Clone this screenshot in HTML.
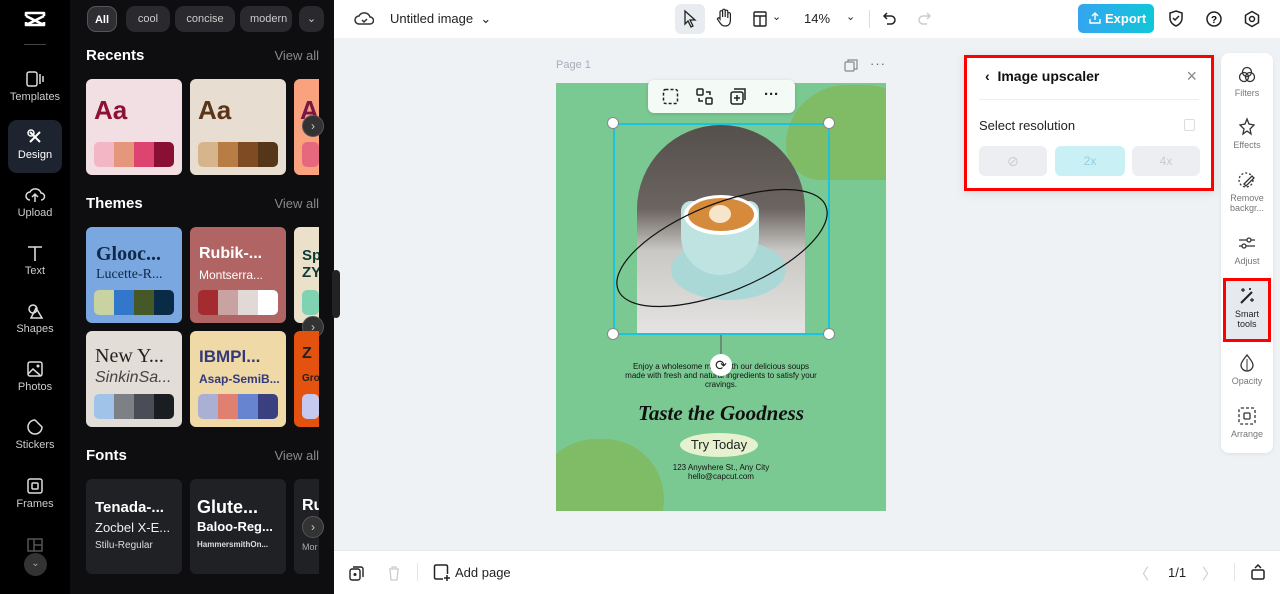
<!DOCTYPE html>
<html><head><meta charset="utf-8"><style>
*{box-sizing:border-box;margin:0;padding:0}
body{width:1280px;height:594px;overflow:hidden;font-family:"Liberation Sans",sans-serif;background:#eff2f5;position:relative}
.abs{position:absolute}
.rail{left:0;top:0;width:70px;height:594px;background:#000}
.ri{position:absolute;left:0;width:70px;text-align:center;color:#ccc;font-size:11px}
.ri svg{display:block;margin:0 auto 3px}
.panel{left:70px;top:0;width:264px;height:594px;background:#0e0e10}
.chip{position:absolute;top:6px;height:26px;border-radius:9px;background:#2a2a2e;color:#ccc;font-size:11px;line-height:26px;text-align:center}
.h{position:absolute;left:16px;color:#fff;font-weight:bold;font-size:15px}
.va{position:absolute;right:15px;color:#888;font-size:13px}
.card{position:absolute;width:96px;height:96px;border-radius:6px;overflow:hidden}
.pal{position:absolute;left:8px;right:8px;bottom:8px;height:25px;border-radius:5px;overflow:hidden;display:flex}
.pal i{flex:1}
.arr{position:absolute;width:22px;height:22px;border-radius:50%;background:#333;border:1px solid #555;color:#ccc;font-size:12px;text-align:center;line-height:20px}
.top{left:334px;top:0;width:946px;height:38px;background:#fff}
.bot{left:334px;top:550px;width:946px;height:44px;background:#fff;border-top:1px solid #e5e7ea}
.sb{left:1221px;top:53px;width:52px;height:400px;background:#fff;border-radius:8px;box-shadow:0 1px 4px rgba(0,0,0,.08)}
.si{position:absolute;left:0;width:52px;text-align:center;font-size:9px;color:#777;line-height:10px}
.si svg{display:block;margin:0 auto 3px}
</style></head><body>
<div class="abs rail">
 <svg class="abs" style="left:23px;top:10px" width="24" height="18" viewBox="0 0 24 18"><path d="M3 6V3h18v3M3 12v3h18v-3M3 6l18 9M21 6L3 15" stroke="#fff" stroke-width="2.6" fill="none" stroke-linejoin="round"/></svg>
 <div class="abs" style="left:24px;top:44px;width:22px;height:1px;background:#444"></div>
 <div class="ri" style="top:70px"><svg width="20" height="18"><rect x="2" y="2" width="10" height="14" rx="2" fill="none" stroke="#ddd" stroke-width="1.5"/><path d="M15 4v10M18 6v6" stroke="#ddd" stroke-width="1.5"/></svg>Templates</div>
 <div class="abs" style="left:8px;top:120px;width:54px;height:53px;border-radius:9px;background:#1d2430"></div>
 <div class="ri" style="top:128px;color:#fff"><svg width="20" height="18"><path d="M5 4l10 10M15 4L5 14" stroke="#fff" stroke-width="2"/><circle cx="6" cy="5" r="3" fill="none" stroke="#fff" stroke-width="1.5"/></svg>Design</div>
 <div class="ri" style="top:186px"><svg width="22" height="18"><path d="M6 14a4 4 0 010-8 6 6 0 0111 1 3.5 3.5 0 010 7M11 16V9M8 11l3-3 3 3" stroke="#ddd" stroke-width="1.5" fill="none"/></svg>Upload</div>
 <div class="ri" style="top:244px"><svg width="20" height="18"><path d="M3 3h14M10 3v14" stroke="#ddd" stroke-width="1.6"/></svg>Text</div>
 <div class="ri" style="top:302px"><svg width="20" height="18"><circle cx="8" cy="7" r="4" fill="none" stroke="#ddd" stroke-width="1.5"/><path d="M11 6l6 10H6z" fill="none" stroke="#ddd" stroke-width="1.5"/></svg>Shapes</div>
 <div class="ri" style="top:360px"><svg width="20" height="18"><rect x="3" y="2" width="14" height="14" rx="2" fill="none" stroke="#ddd" stroke-width="1.5"/><path d="M3 14l5-5 8 7" stroke="#ddd" stroke-width="1.5" fill="none"/><circle cx="13" cy="6" r="1.5" fill="#ddd"/></svg>Photos</div>
 <div class="ri" style="top:418px"><svg width="20" height="18"><path d="M10 2a7 7 0 107 7l-7-7z" fill="none" stroke="#ddd" stroke-width="1.5"/></svg>Stickers</div>
 <div class="ri" style="top:477px"><svg width="20" height="18"><rect x="3" y="2" width="14" height="14" rx="2" fill="none" stroke="#ddd" stroke-width="1.5"/><rect x="7" y="6" width="6" height="6" rx="1" fill="none" stroke="#ddd" stroke-width="1.5"/></svg>Frames</div>
 <svg class="abs" style="left:27px;top:538px" width="16" height="14"><rect x="1" y="1" width="14" height="12" fill="none" stroke="#555" stroke-width="1.5"/><path d="M7 1v12M7 7h8" stroke="#555" stroke-width="1.5"/></svg>
 <div class="abs" style="left:24px;top:553px;width:23px;height:23px;border-radius:50%;background:#333;color:#aaa;font-size:10px;text-align:center;line-height:22px">⌄</div>
</div>
<div class="abs panel">
 <div class="chip" style="left:17px;width:30px;background:#2f2f33;border:1px solid #555;color:#fff;font-weight:bold">All</div>
 <div class="chip" style="left:56px;width:44px">cool</div>
 <div class="chip" style="left:105px;width:60px">concise</div>
 <div class="chip" style="left:170px;width:52px;overflow:hidden;text-align:left;padding-left:10px">modern</div>
 <div class="chip" style="left:229px;width:25px">⌄</div>
 <div class="h" style="top:47px">Recents</div><div class="va" style="top:48px">View all</div>
 <div class="card" style="left:16px;top:79px;background:#f1dfe3"><div style="position:absolute;left:8px;top:16px;font-size:26px;font-weight:bold;color:#8f1036">Aa</div><div class="pal"><i style="background:#f2b6c4"></i><i style="background:#e5977b"></i><i style="background:#de4470"></i><i style="background:#8a0f35"></i></div></div>
 <div class="card" style="left:120px;top:79px;background:#e8ddd1"><div style="position:absolute;left:8px;top:16px;font-size:26px;font-weight:bold;color:#5a3518">Aa</div><div class="pal"><i style="background:#d6b48c"></i><i style="background:#b87d44"></i><i style="background:#7f4b22"></i><i style="background:#563619"></i></div></div>
 <div class="card" style="left:224px;top:79px;width:25px;border-radius:6px 0 0 6px;background:#f9a27d"><div style="position:absolute;left:6px;top:16px;font-size:26px;font-weight:bold;color:#7a1646">A</div><div class="pal" style="right:0"><i style="background:#e5687f"></i></div></div>
 <div class="arr" style="left:232px;top:115px">›</div>
 <div class="h" style="top:195px">Themes</div><div class="va" style="top:196px">View all</div>
 <div class="card" style="left:16px;top:227px;background:#7ba7e0"><div style="position:absolute;left:10px;top:16px;font:bold 20px 'Liberation Serif',serif;color:#0e2a48">Glooc...</div><div style="position:absolute;left:10px;top:40px;font:14px 'Liberation Serif',serif;color:#0e2a48">Lucette-R...</div><div class="pal"><i style="background:#c9d3a2"></i><i style="background:#3277c9"></i><i style="background:#465828"></i><i style="background:#0a2b45"></i></div></div>
 <div class="card" style="left:120px;top:227px;background:#b06463"><div style="position:absolute;left:9px;top:18px;font:bold 16px sans-serif;color:#fff">Rubik-...</div><div style="position:absolute;left:9px;top:41px;font:12px sans-serif;color:#fff">Montserra...</div><div class="pal"><i style="background:#a42c30"></i><i style="background:#c9a3a2"></i><i style="background:#e2d8d6"></i><i style="background:#fff"></i></div></div>
 <div class="card" style="left:224px;top:227px;width:25px;border-radius:6px 0 0 6px;background:#ebe1cb"><div style="position:absolute;left:8px;top:20px;font:bold 15px sans-serif;color:#0d3a34;line-height:17px">Sp<br>ZY</div><div class="pal" style="right:0"><i style="background:#7fd3b3"></i></div></div>
 <div class="arr" style="left:232px;top:316px">›</div>
 <div class="card" style="left:16px;top:331px;background:#e2ddd6"><div style="position:absolute;left:9px;top:14px;font:20px 'Liberation Serif',serif;color:#222">New Y...</div><div style="position:absolute;left:9px;top:38px;font:italic 16px sans-serif;color:#444">SinkinSa...</div><div class="pal"><i style="background:#a0c3ea"></i><i style="background:#7d8185"></i><i style="background:#4a4d55"></i><i style="background:#1a1d22"></i></div></div>
 <div class="card" style="left:120px;top:331px;background:#efd9a7"><div style="position:absolute;left:9px;top:16px;font:bold 17px sans-serif;color:#333a7a">IBMPl...</div><div style="position:absolute;left:9px;top:41px;font:bold 12px sans-serif;color:#333a7a">Asap-SemiB...</div><div class="pal"><i style="background:#aab0d4"></i><i style="background:#e08070"></i><i style="background:#6784d0"></i><i style="background:#3a3f80"></i></div></div>
 <div class="card" style="left:224px;top:331px;width:25px;border-radius:6px 0 0 6px;background:#e3520f"><div style="position:absolute;left:8px;top:14px;font:bold 16px sans-serif;color:#222">Z</div><div style="position:absolute;left:8px;top:42px;font:bold 10px sans-serif;color:#222">Gro</div><div class="pal" style="right:0"><i style="background:#c5c9f0"></i></div></div>
 <div class="h" style="top:447px">Fonts</div><div class="va" style="top:448px">View all</div>
 <div class="card" style="left:16px;top:479px;background:#202124;height:95px"><div style="position:absolute;left:9px;top:20px;font:bold 15px sans-serif;color:#fff">Tenada-...</div><div style="position:absolute;left:9px;top:41px;font:13px sans-serif;color:#eee">Zocbel X-E...</div><div style="position:absolute;left:9px;top:61px;font:10px sans-serif;color:#ddd">Stilu-Regular</div></div>
 <div class="card" style="left:120px;top:479px;background:#202124;height:95px"><div style="position:absolute;left:7px;top:18px;font:bold 18px sans-serif;color:#fff">Glute...</div><div style="position:absolute;left:7px;top:40px;font:bold 13px sans-serif;color:#fff">Baloo-Reg...</div><div style="position:absolute;left:7px;top:61px;font:bold 8px sans-serif;color:#ddd">HammersmithOn...</div></div>
 <div class="card" style="left:224px;top:479px;width:25px;height:95px;border-radius:6px 0 0 6px;background:#202124"><div style="position:absolute;left:8px;top:18px;font:bold 16px sans-serif;color:#fff">Ru</div><div style="position:absolute;left:8px;top:63px;font:9px sans-serif;color:#aaa">Mor</div></div>
 <div class="arr" style="left:232px;top:516px">›</div>
</div>
<div class="abs" style="left:332px;top:270px;width:8px;height:48px;border-radius:4px;background:#222"></div>
<div class="abs top">
 <svg class="abs" style="left:20px;top:10px" width="20" height="18"><path d="M5 14a4 4 0 010-8 6 6 0 0111 1 3.5 3.5 0 010 7z" stroke="#333" stroke-width="1.5" fill="none"/><path d="M8 10l2 2 3-3" stroke="#333" stroke-width="1.5" fill="none"/></svg>
 <div class="abs" style="left:56px;top:11px;font-size:13px;color:#222">Untitled image &nbsp;⌄</div>
 <div class="abs" style="left:341px;top:4px;width:30px;height:30px;border-radius:6px;background:#e8ebef"></div>
 <svg class="abs" style="left:348px;top:9px" width="16" height="20"><path d="M3 2l10 9H8l3 6-2 1-3-6-3 3z" stroke="#222" stroke-width="1.3" fill="none"/></svg>
 <svg class="abs" style="left:381px;top:8px" width="18" height="20"><path d="M5 11V4a1.3 1.3 0 012.6 0v5V2.5a1.3 1.3 0 012.6 0V9V3.5a1.3 1.3 0 012.6 0V10V6a1.3 1.3 0 012.6 0v6c0 4-2 6-5 6s-4-1-6-4l-2-3a1.3 1.3 0 012-1z" stroke="#222" stroke-width="1.2" fill="none"/></svg>
 <svg class="abs" style="left:418px;top:10px" width="16" height="18"><rect x="2" y="2" width="12" height="14" rx="1" fill="none" stroke="#222" stroke-width="1.4"/><path d="M2 6h12M8 6v10" stroke="#222" stroke-width="1.4"/></svg>
 <div class="abs" style="left:438px;top:10px;font-size:11px;color:#222">⌄</div>
 <div class="abs" style="left:470px;top:11px;font-size:13px;color:#222">14%</div>
 <div class="abs" style="left:512px;top:10px;font-size:11px;color:#222">⌄</div>
 <div class="abs" style="left:535px;top:10px;width:1px;height:18px;background:#ddd"></div>
 <svg class="abs" style="left:548px;top:10px" width="16" height="18"><path d="M5 3L2 6l3 3M2 6h7a4 4 0 010 8H5" stroke="#222" stroke-width="1.5" fill="none"/></svg>
 <svg class="abs" style="left:582px;top:10px" width="16" height="18"><path d="M11 3l3 3-3 3M14 6H7a4 4 0 000 8h4" stroke="#ccc" stroke-width="1.5" fill="none"/></svg>
 <div class="abs" style="left:744px;top:4px;width:76px;height:29px;border-radius:5px;background:linear-gradient(90deg,#35a5f0,#10c6d8);color:#fff;font-weight:bold;font-size:13px;line-height:29px;padding-left:27px">Export</div>
 <svg class="abs" style="left:754px;top:11px" width="14" height="14"><path d="M7 9V2M4 5l3-3 3 3M2 8v4h10V8" stroke="#fff" stroke-width="1.4" fill="none"/></svg>
 <svg class="abs" style="left:833px;top:9px" width="18" height="20"><path d="M9 2l6 2v5c0 4-3 7-6 8-3-1-6-4-6-8V4z" stroke="#222" stroke-width="1.5" fill="none"/><path d="M6 9l2 2 4-4" stroke="#222" stroke-width="1.5" fill="none"/></svg>
 <svg class="abs" style="left:871px;top:10px" width="18" height="18"><circle cx="9" cy="9" r="7" stroke="#222" stroke-width="1.5" fill="none"/><text x="9" y="13" font-size="10" font-weight="bold" text-anchor="middle" font-family="Liberation Sans">?</text></svg>
 <svg class="abs" style="left:909px;top:10px" width="18" height="18"><path d="M9 1.5l6.5 3.75v7.5L9 16.5l-6.5-3.75v-7.5z" stroke="#222" stroke-width="1.5" fill="none"/><circle cx="9" cy="9" r="2.5" stroke="#222" stroke-width="1.5" fill="none"/></svg>
</div>
<div class="abs" style="left:556px;top:59px;font-size:11px;color:#aab">Page 1</div>
<svg class="abs" style="left:844px;top:59px" width="14" height="13"><rect x="1" y="3" width="9" height="9" rx="1" fill="none" stroke="#888" stroke-width="1.2"/><path d="M4 3V1h9v9h-3" stroke="#888" stroke-width="1.2" fill="none"/></svg>
<div class="abs" style="left:870px;top:56px;font-size:13px;color:#666;letter-spacing:1px">···</div>
<div class="abs" style="left:556px;top:83px;width:330px;height:428px;background:#7bc992;overflow:hidden">
 <div class="abs" style="left:230px;top:2px;width:140px;height:95px;border-radius:70px 70px 40px 40px;background:#80bb66"></div>
 <div class="abs" style="left:-20px;top:356px;width:128px;height:120px;border-radius:60px;background:#80bb66"></div>
 <div class="abs" style="left:81px;top:42px;width:168px;height:209px;border-radius:84px 84px 0 0;background:linear-gradient(180deg,#55504c 0%,#6b6460 40%,#c9c8c5 60%,#e5e4e2 100%);overflow:hidden">
  <div class="abs" style="left:34px;top:115px;width:115px;height:60px;border-radius:50%;background:#a9d8d6"></div>
  <div class="abs" style="left:44px;top:76px;width:78px;height:74px;border-radius:10px 10px 40px 40px;background:#bfe3e0"></div>
  <div class="abs" style="left:47px;top:70px;width:74px;height:40px;border-radius:50%;background:#fff"></div>
  <div class="abs" style="left:51px;top:73px;width:66px;height:33px;border-radius:50%;background:#d68a3c"></div>
  <div class="abs" style="left:72px;top:80px;width:22px;height:18px;border-radius:50%;background:#f6e5cb"></div>
 </div>
 <svg class="abs" style="left:0;top:0" width="330" height="428"><ellipse cx="166" cy="165" rx="112" ry="44" transform="rotate(-22 166 165)" fill="none" stroke="#111" stroke-width="1.2"/><line x1="165" y1="251" x2="165" y2="272" stroke="#555"/></svg>
 <div class="abs" style="left:0;width:330px;top:279px;text-align:center;font-size:8px;line-height:9px;color:#111">Enjoy a wholesome meal with our delicious soups<br>made with fresh and natural ingredients to satisfy your<br>cravings.</div>
 <div class="abs" style="left:0;width:330px;top:318px;text-align:center;font:italic bold 21px 'Liberation Serif',serif;color:#111">Taste the Goodness</div>
 <div class="abs" style="left:124px;top:350px;width:78px;height:24px;border-radius:50%;background:#e6f2cf;text-align:center;font-size:13px;line-height:24px;color:#222">Try Today</div>
 <div class="abs" style="left:0;width:330px;top:380px;text-align:center;font-size:8px;line-height:9px;color:#111">123 Anywhere St., Any City<br>hello@capcut.com</div>
</div>
<div class="abs" style="left:613px;top:123px;width:217px;height:212px;border:2px solid #1cc3dc"></div>
<div class="abs" style="left:607px;top:117px;width:12px;height:12px;border-radius:50%;background:#fff;border:1px solid #888"></div>
<div class="abs" style="left:823px;top:117px;width:12px;height:12px;border-radius:50%;background:#fff;border:1px solid #888"></div>
<div class="abs" style="left:607px;top:328px;width:12px;height:12px;border-radius:50%;background:#fff;border:1px solid #888"></div>
<div class="abs" style="left:823px;top:328px;width:12px;height:12px;border-radius:50%;background:#fff;border:1px solid #888"></div>
<div class="abs" style="left:710px;top:354px;width:22px;height:22px;border-radius:50%;background:#fff;text-align:center;font-size:14px;line-height:22px;color:#222">⟳</div>
<div class="abs" style="left:648px;top:80px;width:147px;height:33px;border-radius:6px;background:#f4faf5;box-shadow:0 1px 4px rgba(0,0,0,.15)">
 <svg class="abs" style="left:14px;top:8px" width="17" height="17"><rect x="1.5" y="1.5" width="14" height="14" rx="2" fill="none" stroke="#222" stroke-width="1.5" stroke-dasharray="3 2"/></svg>
 <svg class="abs" style="left:48px;top:8px" width="17" height="17"><rect x="1" y="1" width="6" height="6" rx="1" fill="none" stroke="#222" stroke-width="1.5"/><rect x="10" y="10" width="6" height="6" rx="1" fill="none" stroke="#222" stroke-width="1.5"/><path d="M10 4h4v3M7 13H3v-3" stroke="#222" stroke-width="1.5" fill="none"/></svg>
 <svg class="abs" style="left:82px;top:8px" width="17" height="17"><rect x="1" y="4" width="12" height="12" rx="2" fill="none" stroke="#222" stroke-width="1.5"/><path d="M4 1h11v11M7 7v6M4 10h6" stroke="#222" stroke-width="1.5" fill="none"/></svg>
 <div class="abs" style="left:116px;top:6px;font-size:15px;font-weight:bold;color:#222">···</div>
</div>
<div class="abs" style="left:964px;top:55px;width:250px;height:136px;background:#fff;border:3px solid #f00;box-shadow:0 2px 10px rgba(0,0,0,.1)">
 <div class="abs" style="left:18px;top:10px;font-size:14px;font-weight:bold;color:#111">‹&nbsp; Image upscaler</div>
 <div class="abs" style="right:14px;top:8px;font-size:18px;color:#888">×</div>
 <div class="abs" style="left:12px;right:12px;top:41px;height:1px;background:#eee"></div>
 <div class="abs" style="left:12px;top:60px;font-size:13px;color:#222">Select resolution</div>
 <div class="abs" style="right:16px;top:61px;width:11px;height:12px;border:1px solid #ddd;border-radius:2px"></div>
 <div class="abs" style="left:12px;top:88px;width:68px;height:30px;border-radius:6px;background:#eceef1;text-align:center;line-height:30px;color:#ccc;font-size:14px">⊘</div>
 <div class="abs" style="left:88px;top:88px;width:70px;height:30px;border-radius:6px;background:#c8f0f5;text-align:center;line-height:30px;color:#9cd;font-size:12px">2x</div>
 <div class="abs" style="left:165px;top:88px;width:68px;height:30px;border-radius:6px;background:#eceef1;text-align:center;line-height:30px;color:#ccc;font-size:12px">4x</div>
</div>
<div class="abs sb">
 <div class="si" style="top:12px"><svg width="20" height="20"><circle cx="10" cy="7" r="4.5" fill="none" stroke="#333" stroke-width="1.3"/><circle cx="7" cy="12" r="4.5" fill="none" stroke="#333" stroke-width="1.3"/><circle cx="13" cy="12" r="4.5" fill="none" stroke="#333" stroke-width="1.3"/></svg>Filters</div>
 <div class="si" style="top:64px"><svg width="20" height="20"><path d="M10 2l2 5 5 1-4 4 1 5-4-3-4 3 1-5-4-4 5-1z" fill="none" stroke="#333" stroke-width="1.3"/></svg>Effects</div>
 <div class="si" style="top:117px"><svg width="20" height="20"><circle cx="9" cy="10" r="7" fill="none" stroke="#333" stroke-width="1.3" stroke-dasharray="2 2"/><path d="M7 14l8-8 2 2-8 8z" fill="#fff" stroke="#333" stroke-width="1.3"/></svg>Remove<br>backgr...</div>
 <div class="si" style="top:180px"><svg width="20" height="20"><path d="M2 7h16M2 13h16" stroke="#333" stroke-width="1.3"/><circle cx="12" cy="7" r="2" fill="#fff" stroke="#333" stroke-width="1.3"/><circle cx="7" cy="13" r="2" fill="#fff" stroke="#333" stroke-width="1.3"/></svg>Adjust</div>
 <div class="abs" style="left:2px;top:225px;width:48px;height:64px;border:3px solid #f00;background:#e6e9ed"></div>
 <div class="si" style="top:233px;color:#222"><svg width="20" height="20"><path d="M4 17L15 6" stroke="#222" stroke-width="2"/><path d="M6 2v4M4 4h4M15 12v4M13 14h4M13 2v2M12 3h2" stroke="#222" stroke-width="1.2"/></svg>Smart<br>tools</div>
 <div class="si" style="top:300px"><svg width="20" height="20"><path d="M10 2c3 4 6 7 6 10a6 6 0 01-12 0c0-3 3-6 6-10z" fill="none" stroke="#333" stroke-width="1.3"/><path d="M10 6v12" stroke="#333"/></svg>Opacity</div>
 <div class="si" style="top:353px"><svg width="20" height="20"><rect x="2" y="2" width="16" height="16" rx="2" fill="none" stroke="#333" stroke-width="1.3" stroke-dasharray="3 2"/><rect x="7" y="7" width="6" height="6" rx="1" fill="none" stroke="#333" stroke-width="1.3"/></svg>Arrange</div>
</div>
<div class="abs bot">
 <svg class="abs" style="left:15px;top:14px" width="16" height="16"><rect x="1" y="4" width="10" height="11" rx="2" fill="none" stroke="#222" stroke-width="1.4"/><path d="M4 2h8a2 2 0 012 2v8" stroke="#222" stroke-width="1.4" fill="none"/><circle cx="6" cy="9.5" r="1.5" fill="#222"/></svg>
 <svg class="abs" style="left:53px;top:14px" width="14" height="16"><path d="M2 4h10M5 4V2h4v2M3 4l1 11h6l1-11" stroke="#ccc" stroke-width="1.3" fill="none"/></svg>
 <div class="abs" style="left:83px;top:12px;width:1px;height:18px;background:#e5e5e5"></div>
 <svg class="abs" style="left:99px;top:13px" width="18" height="18"><path d="M10 15H3a1.5 1.5 0 01-1.5-1.5v-11A1.5 1.5 0 013 1h10a1.5 1.5 0 011.5 1.5V10" stroke="#222" stroke-width="1.5" fill="none"/><path d="M14 11v6M11 14h6" stroke="#222" stroke-width="1.5"/></svg>
 <div class="abs" style="left:121px;top:14px;font-size:13px;color:#222">Add page</div>
 <div class="abs" style="left:800px;top:12px;font-size:15px;color:#ccc">〈</div>
 <div class="abs" style="left:834px;top:14px;font-size:13px;color:#222">1/1</div>
 <div class="abs" style="left:868px;top:12px;font-size:15px;color:#ccc">〉</div>
 <div class="abs" style="left:900px;top:12px;width:1px;height:18px;background:#e5e5e5"></div>
 <svg class="abs" style="left:916px;top:12px" width="16" height="18"><rect x="2" y="7" width="12" height="9" rx="1.5" fill="none" stroke="#222" stroke-width="1.5"/><path d="M5 5l3-3 3 3" stroke="#222" stroke-width="1.5" fill="none"/></svg>
</div>
</body></html>
